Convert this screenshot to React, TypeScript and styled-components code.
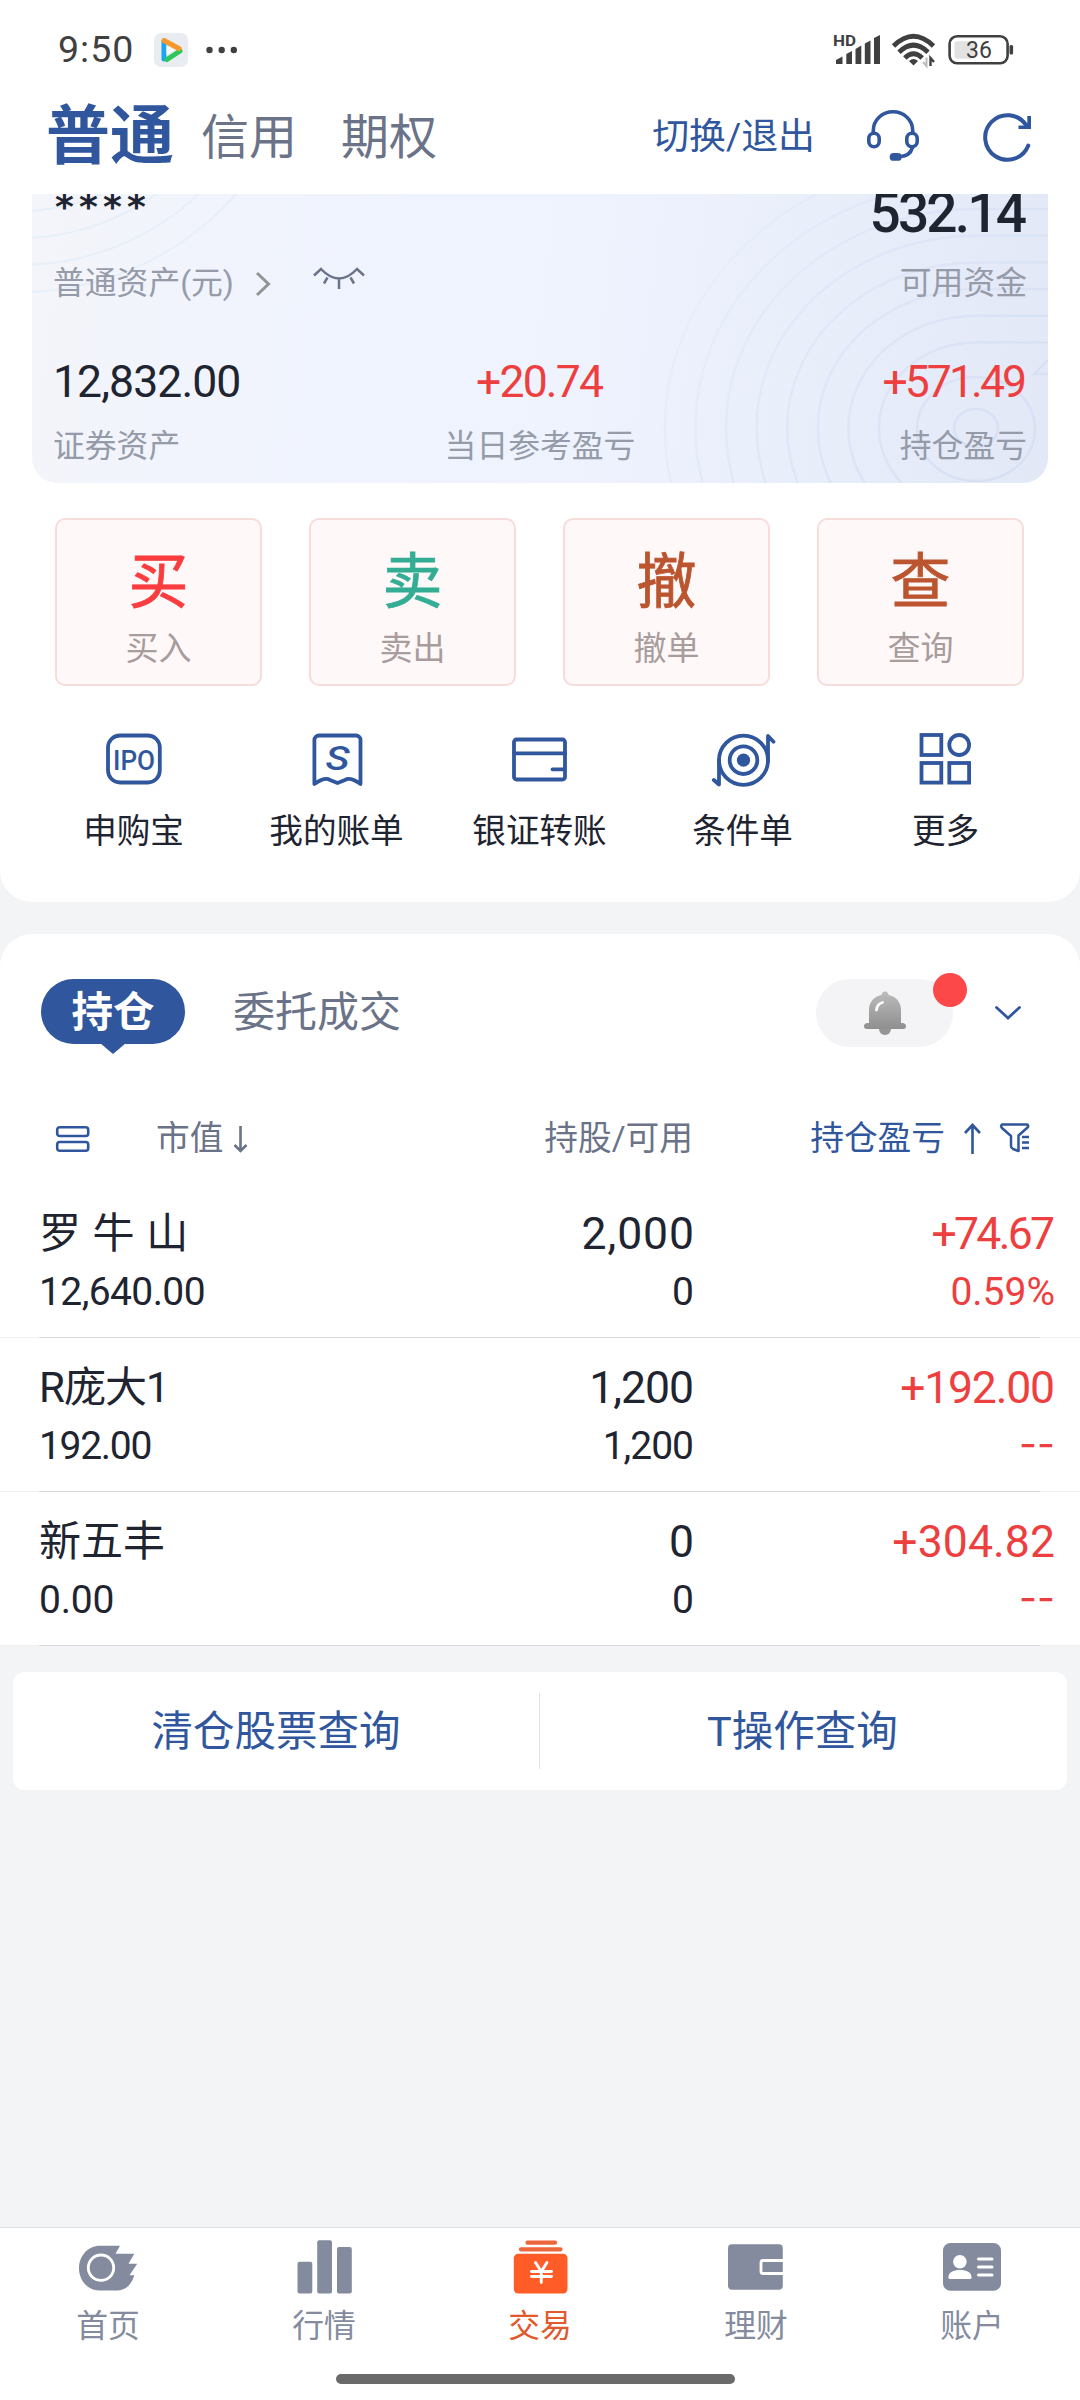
import React from "react";
import styled, { createGlobalStyle } from "styled-components";

const BLUE = "#30579d";
const RED = "#ee3f40";
const INK = "#1f2431";
const SLATE = "#6a7388";
const MUTED = "#959ba8";
const NAV = "#848b9e";
const STATUS = "#404040";

const Global = createGlobalStyle`
  * { box-sizing: border-box; }
  body {
    margin: 0;
    background: #f3f4f6;
    font-family: Roboto, "Noto Sans CJK SC", sans-serif;
    line-height: 1;
  }
`;

const Page = styled.div`
  width: 1080px;
  height: 2400px;
  display: flex;
  flex-direction: column;
  overflow: hidden;
  background: #f3f4f6;
`;

const Text = styled.span<{ $s: number; $c?: string; $w?: number; $ls?: number; $dy?: number }>`
  display: block;
  white-space: pre;
  font-size: ${(p) => p.$s}px;
  color: ${(p) => p.$c ?? INK};
  font-weight: ${(p) => p.$w ?? 400};
  letter-spacing: ${(p) => p.$ls ?? 0}px;
  margin-right: ${(p) => -(p.$ls ?? 0)}px;
  padding-top: ${(p) => p.$dy ?? 0}px;
`;

const Icon = styled.svg`
  display: block;
  flex: none;
  overflow: visible;
`;

/* ---------- status bar ---------- */

const StatusBar = styled.div`
  height: 98px;
  flex: none;
  padding: 2px 68px 0 58px;
  display: flex;
  align-items: center;
  background: #fff;
`;

const StatusRight = styled.div`
  margin-left: auto;
  display: flex;
  align-items: center;
  gap: 10px;
`;

const AppBadge = styled(Icon)`
  margin: 0 18px 0 21px;
`;

/* ---------- header ---------- */

const Header = styled.div`
  height: 96px;
  flex: none;
  padding: 0 48px 20px 46px;
  display: flex;
  align-items: center;
  background: #fff;
`;

const HeaderTabs = styled.div`
  display: flex;
  align-items: center;
`;

const HeaderTab = styled.div<{ $ml?: number }>`
  margin-left: ${(p) => p.$ml ?? 0}px;
`;

const HeaderTools = styled.div`
  margin-left: auto;
  display: flex;
  align-items: center;
`;

/* ---------- top panel ---------- */

const TopPanel = styled.section`
  height: 708px;
  flex: none;
  padding: 0 32px;
  background: #fff;
  border-radius: 0 0 32px 32px;
`;

const AssetCard = styled.div`
  position: relative;
  height: 289px;
  padding: 0 21px;
  display: grid;
  grid-template-rows: 39px 102px 95px 33px;
  overflow: hidden;
  border-radius: 0 0 25px 25px;
  background: linear-gradient(97deg, #f4f5fa 0%, #f1f4fd 18%, #eef3fe 52%, #e9eefb 76%, #e3e8f7 100%);
`;

const Rings = styled.svg`
  position: absolute;
  left: 0;
  top: 0;
`;

const AssetRow = styled.div`
  position: relative;
  display: grid;
  grid-template-columns: 1fr auto 1fr;
  grid-template-rows: 100%;
  align-items: center;
`;

const AssetCell = styled.div<{ $end?: boolean }>`
  display: flex;
  align-items: center;
  justify-content: ${(p) => (p.$end ? "flex-end" : "flex-start")};
`;

const Stars = styled(Text)`
  padding: 0 0 14px 2px;
  font-family: "DejaVu Sans", sans-serif;
`;

const Actions = styled.div`
  display: flex;
  gap: 47px;
  padding: 35px 24px 0 23px;
`;

const ActionBox = styled.button`
  flex: 1;
  height: 168px;
  padding: 33px 0 0;
  border: 2px solid #f8dcdc;
  border-radius: 10px;
  background: #fff8f8;
  font-family: inherit;
  line-height: 1;
  display: flex;
  flex-direction: column;
  align-items: center;
  gap: 19px;
`;

const ActionGlyph = styled(Text)`
  -webkit-text-stroke: 0.8px ${(p) => p.$c};
`;

const Quick = styled.div`
  display: grid;
  grid-template-columns: repeat(5, 203px);
  padding-top: 44px;
`;

const QuickItem = styled.div`
  display: flex;
  flex-direction: column;
  align-items: center;
  gap: 25px;
`;

/* ---------- holdings ---------- */

const Holdings = styled.section`
  height: 711px;
  margin-top: 32px;
  flex: none;
  background: #fff;
  border-radius: 32px 32px 0 0;
`;

const TabRow = styled.div`
  height: 157px;
  padding: 0 59px 2px 41px;
  display: flex;
  align-items: center;
`;

const Pill = styled.div`
  position: relative;
  width: 144px;
  height: 65px;
  margin-right: 48px;
  border-radius: 33px;
  background: ${BLUE};
  display: flex;
  align-items: center;
  justify-content: center;
  &::after {
    content: "";
    position: absolute;
    left: 59px;
    top: 64px;
    border: 13px solid transparent;
    border-top: 11px solid ${BLUE};
    border-bottom: 0;
  }
`;

const BellPill = styled.div`
  position: relative;
  width: 137px;
  height: 68px;
  margin: 2px 42px 0 auto;
  border-radius: 34px;
  background: #f4f4f6;
  display: flex;
  align-items: center;
  justify-content: center;
`;

const RedDot = styled.i`
  position: absolute;
  right: -14px;
  top: -6px;
  width: 34px;
  height: 34px;
  border-radius: 50%;
  background: #fc4848;
`;

const HeadRow = styled.div`
  height: 93px;
  padding: 3px 51px 0 56px;
  display: grid;
  grid-template-columns: 300px 337px 1fr;
  align-items: center;
`;

const HeadCell = styled.div<{ $end?: boolean }>`
  display: flex;
  align-items: center;
  justify-content: ${(p) => (p.$end ? "flex-end" : "flex-start")};
`;

const HeadLabel = styled.div`
  margin-left: 67px;
`;

const SpacedIcon = styled(Icon)<{ $ml: number }>`
  margin-left: ${(p) => p.$ml}px;
`;

const Rows = styled.div``;

const Row = styled.div`
  position: relative;
  height: 154px;
  padding: 20px 25px 0 39px;
  display: grid;
  grid-template-columns: 317px 338px 1fr;
  grid-template-rows: 60px 56px;
  align-items: center;
  &::before {
    content: "";
    position: absolute;
    left: 0;
    right: 0;
    bottom: 0;
    height: 1px;
    background: #eff0f2;
  }
  &::after {
    content: "";
    position: absolute;
    left: 39px;
    right: 40px;
    bottom: 0;
    height: 1px;
    background: #d9dbde;
  }
`;

const Cell = styled.div<{ $end?: boolean }>`
  display: flex;
  justify-content: ${(p) => (p.$end ? "flex-end" : "flex-start")};
`;

const Rate = styled(Text)<{ $empty: boolean }>`
  padding-bottom: ${(p) => (p.$empty ? 6 : 0)}px;
  font-family: ${(p) => (p.$empty ? "Inter" : "Roboto")}, sans-serif;
`;

/* ---------- links ---------- */

const Links = styled.div`
  height: 118px;
  margin: 27px 13px 0;
  flex: none;
  border-radius: 12px;
  background: #fff;
  display: flex;
  align-items: center;
`;

const LinkCell = styled.div`
  width: 526px;
  height: 76px;
  padding-top: 2px;
  display: flex;
  align-items: center;
  justify-content: center;
  & + & {
    border-left: 1px solid #e2e3e6;
  }
`;

/* ---------- bottom nav ---------- */

const BottomNav = styled.nav`
  height: 173px;
  margin-top: auto;
  flex: none;
  border-top: 1px solid #dfe0e3;
  background: #fff;
  display: flex;
  flex-direction: column;
`;

const NavItems = styled.div`
  display: grid;
  grid-template-columns: repeat(5, 1fr);
  padding-top: 10px;
`;

const NavItem = styled.div`
  display: flex;
  flex-direction: column;
  align-items: center;
  gap: 13px;
`;

const HomeBar = styled.div`
  width: 399px;
  height: 10px;
  margin: auto 0 16px 336px;
  border-radius: 5px;
  background: #6a6a6a;
`;

/* ---------- data ---------- */

const actions = [
  { big: "买", label: "买入", color: "#f93d3f" },
  { big: "卖", label: "卖出", color: "#33ad94" },
  { big: "撤", label: "撤单", color: "#bb5530" },
  { big: "查", label: "查询", color: "#bb5530" },
];

const stroke = { fill: "none", stroke: BLUE, strokeWidth: 3.8, strokeLinejoin: "round" as const, strokeLinecap: "round" as const };

const quick = [
  {
    label: "申购宝",
    icon: (
      <>
        <rect x="4" y="5.500" width="51.800" height="47" rx="12" {...stroke} />
        <text x="9" y="39.500" fontSize="28" fontWeight="500" fill={BLUE} textLength="42" lengthAdjust="spacingAndGlyphs">IPO</text>
      </>
    ),
  },
  {
    label: "我的账单",
    icon: (
      <>
        <path d="M7.400 54V10a4.500 4.500 0 0 1 4.500-4.500H49a4.500 4.500 0 0 1 4.500 4.500V54Q43 46.500 38 50L30.500 53L23 50Q18 46.500 7.400 54Z" {...stroke} />
        <text x="18.500" y="40" fontSize="34" fontWeight="500" fontStyle="italic" fill={BLUE} textLength="24" lengthAdjust="spacingAndGlyphs">S</text>
      </>
    ),
  },
  {
    label: "银证转账",
    icon: (
      <>
        <rect x="4" y="9.500" width="51" height="40" rx="2.500" {...stroke} />
        <path d="M4 23.300H55M42.500 39.300H54" {...stroke} />
      </>
    ),
  },
  {
    label: "条件单",
    icon: (
      <>
        <ellipse cx="30.500" cy="30.200" rx="24.500" ry="24.600" {...stroke} />
        <circle cx="30.500" cy="30.200" r="13.800" {...stroke} />
        <circle cx="30.500" cy="30.200" r="6.600" fill={BLUE} />
        <path d="M55 30V6L60.500 11.700M6 30V54.500L.8 50" {...stroke} />
      </>
    ),
  },
  {
    label: "更多",
    icon: (
      <g {...stroke} strokeLinejoin="miter">
        <rect x="5.500" y="5" width="19.800" height="20" />
        <ellipse cx="43.200" cy="15" rx="9.900" ry="10" />
        <rect x="5.500" y="33" width="19.800" height="19.600" />
        <rect x="33.300" y="33" width="19.800" height="19.600" />
      </g>
    ),
  },
];

const holdings = [
  { name: "罗 牛 山", nls: 0.6, value: "12,640.00", vls: -0.6, qty: "2,000", qls: 0.9, avail: "0", als: 0, pl: "+74.67", pls: -2.7, rate: "0.59%", rls: 0 },
  { name: "R庞大1", nls: -1, value: "192.00", vls: -1.3, qty: "1,200", qls: -1, avail: "1,200", als: -1, pl: "+192.00", pls: -1.2, rate: "--", rls: 0 },
  { name: "新五丰", nls: 0, value: "0.00", vls: -0.2, qty: "0", qls: 0, avail: "0", als: 0, pl: "+304.82", pls: 0.1, rate: "--", rls: 0 },
];

const nav = [
  {
    label: "首页",
    icon: (
      <g transform="translate(1 7.700)">
        <path d="M21 0H41L36.500 8H55.300L49.500 18H58.200L50.500 29.500H55.300C53 38 47 44.900 38 44.900H21C9 44.900 0 35 0 22.500S9 0 21 0Z" fill={NAV} />
        <circle cx="22" cy="22" r="12.700" fill="none" stroke="#fff" strokeWidth="2.800" />
      </g>
    ),
  },
  {
    label: "行情",
    icon: (
      <g fill={NAV}>
        <rect x="3.500" y="23.700" width="14.800" height="31.800" rx="2" />
        <rect x="23.200" y="2.300" width="14.800" height="53.200" rx="2" />
        <rect x="43" y="9" width="14.800" height="46.500" rx="2" />
      </g>
    ),
  },
  {
    label: "交易",
    active: true,
    icon: (
      <>
        <rect x="3.800" y="15.700" width="53.700" height="39.800" rx="4.500" fill="#ff5c28" />
        <path d="M11 11.300H50.500M17.500 4.700H45" stroke="#ee673a" strokeWidth="4.300" strokeLinecap="round" />
        <path d="M25.500 24.500L31.300 33.500L37 24.500M31.300 33.500V44.500M21.500 33.500H41.500M21.500 38.500H41.500" fill="none" stroke="#fff" strokeWidth="2.900" strokeLinecap="round" />
      </>
    ),
  },
  {
    label: "理财",
    icon: (
      <>
        <rect x="2" y="6.300" width="54.800" height="45.400" rx="4" fill={NAV} />
        <path d="M57 22.500H37a2 2 0 0 0-2 2V33.500a2 2 0 0 0 2 2H57" fill="none" stroke="#fff" strokeWidth="2.800" />
      </>
    ),
  },
  {
    label: "账户",
    icon: (
      <>
        <rect x="1" y="5" width="58" height="47.800" rx="7.500" fill={NAV} />
        <circle cx="17.900" cy="23.700" r="6.800" fill="#fff" />
        <path d="M6.400 39.500C6.400 34 11.500 32 18 32S29.500 34 29.500 39.500Q29.500 41 28 41H8Q6.400 41 6.400 39.500Z" fill="#fff" />
        <path d="M36.500 21H50M36.500 29H50M36.500 37H50" stroke="#fff" strokeWidth="3" strokeLinecap="round" />
      </>
    ),
  },
];

const ringSteps = [0, 1, 2, 3, 4, 5, 6, 7];

function StatusIcons() {
  return (
    <StatusRight>
      <Icon width="48" height="32" viewBox="0 0 48 32">
        <text x="-1" y="11.500" fontSize="15" fontWeight="700" fill={STATUS} textLength="23" lengthAdjust="spacingAndGlyphs">HD</text>
        <path d="M2 30V26L8.500 22.500V30ZM12.300 30V20L18 17V30ZM21.500 30V15L27.300 11.500V30ZM30.800 30V9.500L36.500 6.500V30ZM40 30V4L46 1V30Z" fill={STATUS} />
      </Icon>
      <Icon width="43" height="33" viewBox="0 0 43 33">
        <g fill="none" stroke={STATUS} strokeWidth="4.800">
          <path d="M1.500 12Q21.500-7.500 41.500 12" />
          <path d="M7 18.200Q21.500 4 36 18.200" />
          <path d="M12.800 24Q21.500 15.500 30.200 24" />
        </g>
        <path d="M17 27Q21.500 23 26 27L21.500 31.500Z" fill={STATUS} />
        <path d="M34.500 23.500V32L31 28" stroke="#bbb" strokeWidth="2" fill="none" />
        <path d="M38.500 32V24L42 28" stroke={STATUS} strokeWidth="2.400" fill="none" />
      </Icon>
      <Icon width="67" height="30" viewBox="0 0 67 30">
        <rect x="4.600" y="1.300" width="58" height="27" rx="7.500" fill="none" stroke={STATUS} strokeWidth="2.600" />
        <rect x="9.500" y="6.200" width="20" height="17.500" rx="3" fill="#e2e2e2" />
        <rect x="64.500" y="10" width="3.600" height="9.500" rx="1.500" fill={STATUS} />
        <text x="34" y="23" textAnchor="middle" fontSize="23" fontWeight="400" fill={STATUS}>36</text>
      </Icon>
    </StatusRight>
  );
}

export default function App() {
  return (
    <Page>
      <Global />
      <StatusBar>
        <Text $s={37.5} $c={STATUS} $w={400} $ls={1}>9:50</Text>
        <AppBadge width="34" height="34" viewBox="0 0 34 34">
          <rect width="34" height="34" rx="7" fill="#e9edf1" />
          <path d="M10 8V26" stroke="#1aa5f5" strokeWidth="5" strokeLinecap="round" />
          <path d="M13 26.500L26 18" stroke="#2fc65b" strokeWidth="5" strokeLinecap="round" />
          <path d="M10 7.500L25 15.500" stroke="#f6982b" strokeWidth="5" strokeLinecap="round" />
          <path d="M12.500 12.500V22L20 17Z" fill="#fff" />
        </AppBadge>
        <Icon width="32" height="8" viewBox="0 0 32 8">
          <g fill={STATUS}>
            <circle cx="3.500" cy="4" r="3.200" />
            <circle cx="15.700" cy="4" r="3.200" />
            <circle cx="27.800" cy="4" r="3.200" />
          </g>
        </Icon>
        <StatusIcons />
      </StatusBar>

      <Header>
        <HeaderTabs>
          <HeaderTab><Text $s={64} $c={BLUE} $w={700} $dy={2}>普通</Text></HeaderTab>
          <HeaderTab $ml={27}><Text $s={48} $c={SLATE} $dy={3}>信用</Text></HeaderTab>
          <HeaderTab $ml={44}><Text $s={48} $c={SLATE} $dy={3}>期权</Text></HeaderTab>
        </HeaderTabs>
        <HeaderTools>
          <Text $s={36.9} $c={BLUE} $dy={2}>切换/退出</Text>
          <SpacedIcon $ml={52} width="52" height="52" viewBox="0 0 52 52">
            <g fill="none" stroke={BLUE} strokeWidth="3.600" strokeLinecap="round">
              <path d="M6.300 22V20.500A19.700 18.700 0 0 1 45.700 20.500V22" />
              <rect x="1.800" y="23.200" width="10.400" height="13.500" rx="5.200" />
              <rect x="39.800" y="23.200" width="10.400" height="13.500" rx="5.200" />
              <path d="M45.500 37.500C44 43 39 46.500 32 46.500" />
            </g>
            <rect x="22.700" y="43" width="12" height="7.800" rx="3.900" fill={BLUE} />
          </SpacedIcon>
          <SpacedIcon $ml={64} width="49" height="49" viewBox="0 0 49 49">
            <path d="M45.300 33.500A22.300 22.300 0 1 1 43 13" fill="none" stroke={BLUE} strokeWidth="4" strokeLinecap="round" />
            <path d="M44.300 4H48V17H35.500V13.500H41L44.300 11Z" fill={BLUE} />
          </SpacedIcon>
        </HeaderTools>
      </Header>

      <TopPanel>
        <AssetCard>
          <Rings width="1016" height="289" viewBox="0 0 1016 289">
            <defs>
              <linearGradient id="ringFade" gradientUnits="userSpaceOnUse" x1="640" y1="40" x2="960" y2="240">
                <stop offset="0" stopColor="#d9e3f8" stopOpacity=".1" />
                <stop offset="1" stopColor="#d8e1f4" />
              </linearGradient>
            </defs>
            <g fill="none" stroke="#e7eff8" strokeWidth="2">
              <circle cx="-12" cy="-189" r="206" />
              <circle cx="-12" cy="-189" r="233" />
              <circle cx="-12" cy="-189" r="260" />
              <circle cx="-12" cy="-189" r="287" />
            </g>
            <g fill="none" stroke="url(#ringFade)" strokeWidth="2.500">
              <ellipse cx="944" cy="234" rx="22" ry="19" />
              <ellipse cx="944" cy="235" rx="59" ry="52" />
              {ringSteps.map((k) => {
                const rx = 97 + 30.6 * k;
                const ry = 85.5 + 26.7 * k;
                return <path key={k} d={`M1016 ${234 - ry}H944A${rx} ${ry} 0 0 0 ${944 - rx} 234A${rx} ${ry} 0 0 0 944 ${234 + ry}`} />;
              })}
              <path d="M1016 166L1002 180H1016" />
            </g>
          </Rings>
          <AssetRow>
            <AssetCell><Stars $s={36} $w={700} $ls={5.2}>****</Stars></AssetCell>
            <span />
            <AssetCell $end><Text $s={55} $w={500} $ls={-2.8}>532.14</Text></AssetCell>
          </AssetRow>
          <AssetRow>
            <AssetCell>
              <Text $s={31.8} $c={MUTED}>普通资产(元)</Text>
              <SpacedIcon $ml={21} width="16" height="26" viewBox="0 0 16 26">
                <path d="M2 2L13.500 13L2 24" fill="none" stroke="#949494" strokeWidth="3" />
              </SpacedIcon>
              <SpacedIcon $ml={42} width="52" height="40" viewBox="0 0 52 40">
                <g fill="none" stroke={SLATE} strokeWidth="2.500">
                  <path d="M1 11.500L8 5Q26 24 44 5L51 11.500M14.500 13.500L11 19.500M26 15.500V25M37.500 13.500L41 19.500" />
                </g>
              </SpacedIcon>
            </AssetCell>
            <span />
            <AssetCell $end><Text $s={31.8} $c={MUTED}>可用资金</Text></AssetCell>
          </AssetRow>
          <AssetRow>
            <AssetCell><Text $s={44.5} $ls={-0.9}>12,832.00</Text></AssetCell>
            <Text $s={44.5} $c={RED} $ls={-1.8}>+20.74</Text>
            <AssetCell $end><Text $s={44.5} $c={RED} $ls={-2.9}>+571.49</Text></AssetCell>
          </AssetRow>
          <AssetRow>
            <AssetCell><Text $s={31.8} $c={MUTED}>证券资产</Text></AssetCell>
            <Text $s={31.8} $c={MUTED}>当日参考盈亏</Text>
            <AssetCell $end><Text $s={31.8} $c={MUTED}>持仓盈亏</Text></AssetCell>
          </AssetRow>
        </AssetCard>

        <Actions>
          {actions.map((a) => (
            <ActionBox key={a.big}>
              <ActionGlyph $s={60} $c={a.color}>{a.big}</ActionGlyph>
              <Text $s={33} $c="#a89c9c">{a.label}</Text>
            </ActionBox>
          ))}
        </Actions>

        <Quick>
          {quick.map((q) => (
            <QuickItem key={q.label}>
              <Icon width="60" height="60" viewBox="0 0 60 60">{q.icon}</Icon>
              <Text $s={33.6}>{q.label}</Text>
            </QuickItem>
          ))}
        </Quick>
      </TopPanel>

      <Holdings>
        <TabRow>
          <Pill><Text $s={41.5} $c="#fff" $w={700} $dy={2}>持仓</Text></Pill>
          <Text $s={42} $c={SLATE} $dy={3}>委托成交</Text>
          <BellPill>
            <Icon width="42" height="44" viewBox="0 0 42 44">
              <defs>
                <linearGradient id="bell" x1="0" y1="0" x2="0" y2="1">
                  <stop offset="0" stopColor="#bcbcbc" />
                  <stop offset="1" stopColor="#8f8f8f" />
                </linearGradient>
              </defs>
              <circle cx="21" cy="38" r="6" fill="#959595" />
              <path d="M17.500 4Q18 .5 21 .5T24.500 4C32 5.500 37 11 37 19V32H39Q42 32.500 42 35.300T39 38H3Q0 38 0 35.300T3 32H5V19C5 11 10 5.500 17.500 4Z" fill="url(#bell)" />
              <path d="M12.500 19Q13 13 18.500 11.500" fill="none" stroke="#fff" strokeWidth="2.800" strokeLinecap="round" />
            </Icon>
            <RedDot />
          </BellPill>
          <Icon width="26" height="12" viewBox="0 0 26 12">
            <path d="M1.500 1.500L13 12L24.500 1.500" fill="none" stroke={BLUE} strokeWidth="2.800" strokeLinecap="round" />
          </Icon>
        </TabRow>

        <HeadRow>
          <HeadCell>
            <Icon width="33" height="26" viewBox="0 0 33 26">
              <g fill="none" stroke={BLUE} strokeWidth="2.600">
                <rect x="1.200" y="1.200" width="31" height="8.800" rx="2.500" />
                <rect x="1.200" y="16" width="31" height="8.800" rx="2.500" />
              </g>
            </Icon>
            <HeadLabel><Text $s={33.7} $c={SLATE}>市值</Text></HeadLabel>
            <SpacedIcon $ml={10} width="15" height="28" viewBox="0 0 15 28">
              <path d="M7.500 1V26M1.500 20L7.500 26L13.500 20" fill="none" stroke={SLATE} strokeWidth="2.600" />
            </SpacedIcon>
          </HeadCell>
          <HeadCell $end><Text $s={33.7} $c={SLATE}>持股/可用</Text></HeadCell>
          <HeadCell $end>
            <Text $s={33.7} $c={BLUE}>持仓盈亏</Text>
            <SpacedIcon $ml={19} width="17" height="31" viewBox="0 0 17 31">
              <path d="M8.500 31V2.500M1 10L8.500 2L16 10" fill="none" stroke={BLUE} strokeWidth="2.600" />
            </SpacedIcon>
            <SpacedIcon $ml={19} width="29" height="32" viewBox="0 0 29 32">
              <path d="M2 1.500H27.500Q29 3.500 27 5L18.500 12.500V28L13 26Q11 25 11 23V13L2.500 5.500Q0 3 2 1.500Z" fill="none" stroke={BLUE} strokeWidth="2.500" strokeLinejoin="round" />
              <path d="M22 14H29M22 19.500H29M22 25H29" stroke={BLUE} strokeWidth="2.500" />
            </SpacedIcon>
          </HeadCell>
        </HeadRow>

        <Rows>
          {holdings.map((h) => (
            <Row key={h.name}>
              <Cell><Text $s={42} $ls={h.nls}>{h.name}</Text></Cell>
              <Cell $end><Text $s={44.5} $ls={h.qls}>{h.qty}</Text></Cell>
              <Cell $end><Text $s={44.5} $c={RED} $ls={h.pls}>{h.pl}</Text></Cell>
              <Cell><Text $s={39} $ls={h.vls}>{h.value}</Text></Cell>
              <Cell $end><Text $s={39} $ls={h.als}>{h.avail}</Text></Cell>
              <Cell $end><Rate $empty={h.rate === "--"} $s={39} $c={RED} $ls={h.rls}>{h.rate}</Rate></Cell>
            </Row>
          ))}
        </Rows>
      </Holdings>

      <Links>
        <LinkCell><Text $s={41.5} $c={BLUE}>清仓股票查询</Text></LinkCell>
        <LinkCell><Text $s={41.5} $c={BLUE}>T操作查询</Text></LinkCell>
      </Links>

      <BottomNav>
        <NavItems>
          {nav.map((n) => (
            <NavItem key={n.label}>
              <Icon width="60" height="60" viewBox="0 0 60 60">{n.icon}</Icon>
              <Text $s={31.8} $c={n.active ? "#e2592d" : NAV}>{n.label}</Text>
            </NavItem>
          ))}
        </NavItems>
        <HomeBar />
      </BottomNav>
    </Page>
  );
}
